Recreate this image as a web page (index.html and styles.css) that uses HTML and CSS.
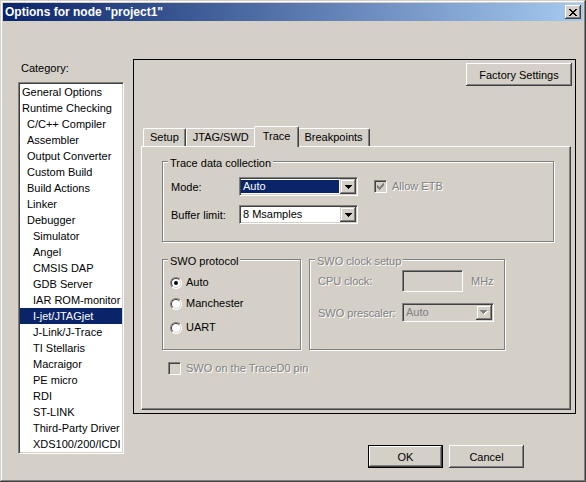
FILE: index.html
```html
<!DOCTYPE html>
<html>
<head>
<meta charset="utf-8">
<title>Options for node "project1"</title>
<link rel="stylesheet" href="styles.css">
</head>
<body>
<div class="window">
  <div class="titlebar">
    <span class="title">Options for node "project1"</span>
    <span class="close"><svg width="8" height="7" viewBox="0 0 8 7" shape-rendering="crispEdges"><path d="M0 0h2v1h-2z M6 0h2v1h-2z M1 1h2v1h-2z M5 1h2v1h-2z M2 2h4v1h-4z M3 3h2v1h-2z M2 4h4v1h-4z M1 5h2v1h-2z M5 5h2v1h-2z M0 6h2v1h-2z M6 6h2v1h-2z" fill="#000"/></svg></span>
  </div>
  <div class="client">
    <div class="left">
      <div class="catlabel">Category:</div>
      <ul class="list">
        <li class="l0">General Options</li>
        <li class="l0">Runtime Checking</li>
        <li class="l1">C/C++ Compiler</li>
        <li class="l1">Assembler</li>
        <li class="l1">Output Converter</li>
        <li class="l1">Custom Build</li>
        <li class="l1">Build Actions</li>
        <li class="l1">Linker</li>
        <li class="l1">Debugger</li>
        <li class="l2">Simulator</li>
        <li class="l2">Angel</li>
        <li class="l2">CMSIS DAP</li>
        <li class="l2">GDB Server</li>
        <li class="l2">IAR ROM-monitor</li>
        <li class="l2 sel">I-jet/JTAGjet</li>
        <li class="l2">J-Link/J-Trace</li>
        <li class="l2">TI Stellaris</li>
        <li class="l2">Macraigor</li>
        <li class="l2">PE micro</li>
        <li class="l2">RDI</li>
        <li class="l2">ST-LINK</li>
        <li class="l2">Third-Party Driver</li>
        <li class="l2">XDS100/200/ICDI</li>
      </ul>
    </div>
    <div class="right">
      <div class="frame">
        <div class="btn factory">Factory Settings</div>
        <div class="tabs">
          <div class="tab">Setup</div>
          <div class="tab">JTAG/SWD</div>
          <div class="tab sel">Trace</div>
          <div class="tab">Breakpoints</div>
        </div>
        <div class="tabpanel">
          <div class="group g-trace">
            <span class="legend">Trace data collection</span>
            <div class="frow">
              <span class="flabel">Mode:</span>
              <div class="combo">
                <span class="hl">Auto</span>
                <span class="dd"><svg width="7" height="4" viewBox="0 0 7 4" shape-rendering="crispEdges"><path d="M0 0h7v1h-7z M1 1h5v1h-5z M2 2h3v1h-3z M3 3h1v1h-1z" fill="#000"/></svg></span>
              </div>
              <span class="cb"><svg width="7" height="7" viewBox="0 0 7 7" shape-rendering="crispEdges"><path d="M6 0h1v1h-1z M5 1h2v1h-2z M0 2h1v1h-1z M4 2h3v1h-3z M0 3h2v1h-2z M3 3h3v1h-3z M0 4h5v1h-5z M1 5h3v1h-3z M2 6h1v1h-1z" fill="#808080"/></svg></span>
              <span class="cblabel dis">Allow ETB</span>
            </div>
            <div class="frow">
              <span class="flabel">Buffer limit:</span>
              <div class="combo">
                <span class="txt">8 Msamples</span>
                <span class="dd"><svg width="7" height="4" viewBox="0 0 7 4" shape-rendering="crispEdges"><path d="M0 0h7v1h-7z M1 1h5v1h-5z M2 2h3v1h-3z M3 3h1v1h-1z" fill="#000"/></svg></span>
              </div>
            </div>
          </div>
          <div class="grow2">
            <div class="group g-proto">
              <span class="legend">SWO protocol</span>
              <div class="rrow"><span class="radio on"></span><span class="rlabel">Auto</span></div>
              <div class="rrow r2"><span class="radio"></span><span class="rlabel">Manchester</span></div>
              <div class="rrow r3"><span class="radio"></span><span class="rlabel">UART</span></div>
            </div>
            <div class="group g-clock">
              <span class="legend dis">SWO clock setup</span>
              <div class="crow">
                <span class="clabel dis">CPU clock:</span>
                <span class="edit"></span>
                <span class="unit dis">MHz</span>
              </div>
              <div class="crow c2">
                <span class="clabel dis">SWO prescaler:</span>
                <div class="combo off">
                  <span class="txt">Auto</span>
                  <span class="dd"><svg width="8" height="5" viewBox="0 0 8 5" shape-rendering="crispEdges"><path d="M1 1h7v1h-7z M2 2h5v1h-5z M3 3h3v1h-3z M4 4h1v1h-1z" fill="#fff"/><path d="M0 0h7v1h-7z M1 1h5v1h-5z M2 2h3v1h-3z M3 3h1v1h-1z" fill="#808080"/></svg></span>
                </div>
              </div>
            </div>
          </div>
          <div class="pinrow">
            <span class="cb"></span>
            <span class="cblabel dis">SWO on the TraceD0 pin</span>
          </div>
        </div>
      </div>
      <div class="btnrow">
        <div class="btn default">OK</div>
        <div class="btn">Cancel</div>
      </div>
    </div>
  </div>
</div>
</body>
</html>
```
FILE: styles.css
```css
* { box-sizing: border-box; }
html, body { margin: 0; padding: 0; }
body {
  width: 586px;
  height: 482px;
  overflow: hidden;
  background: #d4d0c8;
  font-family: "Liberation Sans", Arial, sans-serif;
  font-size: 11px;
  color: #000;
}

.window {
  width: 586px;
  height: 482px;
  padding: 3px;
  display: flex;
  flex-direction: column;
  background: #d4d0c8;
  box-shadow: inset -1px -1px 0 #404040, inset 1px 1px 0 #d4d0c8, inset -2px -2px 0 #808080, inset 2px 2px 0 #fff;
}

.titlebar {
  height: 18px;
  flex: none;
  display: flex;
  align-items: center;
  justify-content: space-between;
  padding: 0 2px 0 2px;
  background: linear-gradient(to right, #0a246a, #a6caf0);
}
.title { color: #fff; font-weight: bold; font-size: 12px; line-height: 14px; }
.close {
  width: 16px;
  height: 14px;
  display: flex;
  align-items: center;
  justify-content: center;
  background: #d4d0c8;
  box-shadow: inset -1px -1px 0 #404040, inset 1px 1px 0 #fff, inset -2px -2px 0 #808080, inset 2px 2px 0 #d4d0c8;
}
.close svg { display: block; }

.client {
  flex: 1;
  display: flex;
  padding: 38px 0 0 15px;
}

.left { width: 106px; margin-right: 9px; display: flex; flex-direction: column; }
.catlabel { margin-top: 3px; line-height: 13px; padding-left: 3px; }
.list {
  margin: 7px 0 0;
  padding: 1px;
  list-style: none;
  height: 372px;
  background: #fff;
  border: 1px solid;
  border-color: #808080 #fff #fff #808080;
  box-shadow: inset 1px 1px 0 #404040, inset -1px -1px 0 #d4d0c8;
}
.list li { height: 16px; line-height: 16px; white-space: nowrap; }
.list .l0 { padding-left: 2px; }
.list .l1 { padding-left: 7px; }
.list .l2 { padding-left: 13px; }
.list .sel { background: #0a246a; color: #fff; }

.right { width: 443px; display: flex; flex-direction: column; }
.frame {
  height: 355px;
  border: 1px solid #000;
  padding: 3px 3px 3px 7px;
  display: flex;
  flex-direction: column;
}

.btn {
  height: 23px;
  display: flex;
  align-items: center;
  justify-content: center;
  background: #d4d0c8;
  box-shadow: inset -1px -1px 0 #404040, inset 1px 1px 0 #fff, inset -2px -2px 0 #808080, inset 2px 2px 0 #d4d0c8;
}
.btn.default { border: 1px solid #000; }
.factory { align-self: flex-end; width: 106px; }

.tabs {
  margin-top: 40px;
  height: 20px;
  flex: none;
  display: flex;
  align-items: flex-end;
  padding-left: 2px;
}
.tab {
  height: 18px;
  padding: 0 6px;
  line-height: 17px;
  border-top: 1px solid #fff;
  border-left: 1px solid #fff;
  border-right: 1px solid #404040;
  border-radius: 2px 2px 0 0;
  box-shadow: inset -1px 0 0 #808080;
  background: #d4d0c8;
}
.tab.sel {
  height: 21px;
  margin: 0 -2px -1px;
  padding: 0 8px;
  line-height: 18px;
  position: relative;
  z-index: 1;
}

.tabpanel {
  flex: 1;
  margin-right: 1px;
  border: 1px solid;
  border-color: #fff #404040 #404040 #fff;
  box-shadow: inset -1px -1px 0 #808080;
  padding: 14px 0 0 20px;
  display: flex;
  flex-direction: column;
}

.group {
  position: relative;
  border: 1px solid #808080;
  box-shadow: inset 1px 1px 0 #fff, 1px 1px 0 #fff;
}
.legend {
  position: absolute;
  top: -5px;
  left: 5px;
  padding: 0 2px;
  line-height: 13px;
  background: #d4d0c8;
}

.dis { color: #808080; text-shadow: 1px 1px 0 #fff; }

.g-trace { width: 392px; height: 81px; padding: 15px 0 0 8px; }
.frow { display: flex; align-items: center; height: 19px; }
.frow + .frow { margin-top: 9px; }
.flabel { width: 68px; }

.combo {
  width: 119px;
  height: 19px;
  display: flex;
  padding: 1px;
  background: #fff;
  border: 1px solid;
  border-color: #808080 #fff #fff #808080;
  box-shadow: inset 1px 1px 0 #404040, inset -1px -1px 0 #d4d0c8;
}
.combo .hl {
  flex: 1;
  margin: 1px 1px 1px 0;
  padding-left: 2px;
  line-height: 13px;
  background: #0a246a;
  color: #fff;
}
.combo .txt { flex: 1; padding-left: 2px; line-height: 15px; }
.dd {
  width: 16px;
  height: 15px;
  display: flex;
  align-items: center;
  justify-content: center;
  background: #d4d0c8;
  box-shadow: inset -1px -1px 0 #404040, inset 1px 1px 0 #d4d0c8, inset -2px -2px 0 #808080, inset 2px 2px 0 #fff;
}
.dd svg { display: block; }
.combo.off { width: 92px; background: #d4d0c8; }
.combo.off .txt { color: #808080; }

.cb {
  width: 13px;
  height: 13px;
  display: flex;
  align-items: center;
  justify-content: center;
  background: #d4d0c8;
  border: 1px solid;
  border-color: #808080 #fff #fff #808080;
  box-shadow: inset 1px 1px 0 #404040, inset -1px -1px 0 #d4d0c8;
}
.cb svg { display: block; }
.frow .cb { margin-left: 16px; }
.cblabel { margin-left: 5px; line-height: 13px; }

.grow2 { display: flex; margin-top: 17px; }
.g-proto { width: 139px; height: 91px; padding: 16px 0 0 7px; }
.rrow { display: flex; align-items: center; height: 13px; }
.rrow.r2 { margin-top: 8px; }
.rrow.r3 { margin-top: 11px; }
.radio {
  width: 12px;
  height: 12px;
  position: relative;
  border-radius: 50%;
  background: #fff;
  border: 1px solid;
  border-color: #808080 #fff #fff #808080;
}
.radio::before {
  content: "";
  position: absolute;
  inset: 0;
  border-radius: 50%;
  border: 1px solid;
  border-color: #404040 #d4d0c8 #d4d0c8 #404040;
}
.radio.on::after {
  content: "";
  position: absolute;
  left: 3px;
  top: 3px;
  width: 4px;
  height: 4px;
  border-radius: 50%;
  background: #000;
}
.rlabel { margin-left: 4px; line-height: 13px; }

.g-clock { margin-left: 8px; width: 196px; height: 91px; padding: 10px 0 0 8px; }
.crow { display: flex; align-items: center; height: 22px; }
.crow.c2 { margin-top: 11px; height: 19px; }
.clabel { width: 84px; }
.edit {
  width: 61px;
  height: 22px;
  background: #d4d0c8;
  border: 1px solid;
  border-color: #808080 #fff #fff #808080;
  box-shadow: inset 1px 1px 0 #404040, inset -1px -1px 0 #d4d0c8;
}
.unit { margin-left: 8px; }

.pinrow { display: flex; align-items: center; margin-top: 12px; padding-left: 6px; }

.btnrow {
  margin-top: 31px;
  display: flex;
  justify-content: flex-end;
  gap: 6px;
  padding-right: 52px;
}
.btnrow .btn { width: 75px; }
```
